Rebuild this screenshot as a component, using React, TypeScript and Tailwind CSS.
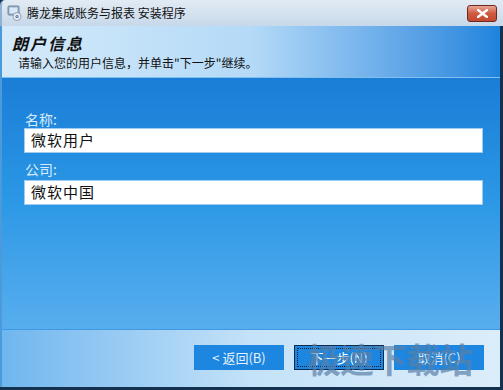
import React from 'react'

const cjk = { fontFamily: '"Noto Sans CJK SC", "Noto Sans", sans-serif' }

const InstallerIcon = () => (
  <svg width="16" height="16" viewBox="0 0 16 16">
    <rect x="1" y="1" width="11" height="9" rx="1" fill="#9bb3cc" stroke="#5c7591" strokeWidth="0.8" />
    <rect x="2.5" y="2.5" width="8" height="6" fill="#d8e8f6" />
    <circle cx="10" cy="11.5" r="4" fill="#e9eef3" stroke="#7f8fa0" strokeWidth="0.8" />
    <circle cx="10" cy="11.5" r="1.6" fill="#4a6ea0" />
    <circle cx="10" cy="11.5" r="0.6" fill="#ffffff" />
  </svg>
)

const WizardButton = ({ label, focused }: { label: string; focused?: boolean }) => (
  <button
    type="button"
    className={
      focused
        ? 'w-[90px] h-[25px] bg-[#1d86e0] text-white text-[13px] border border-[#0d2c4e] p-[2px] flex items-stretch'
        : 'w-[90px] h-[25px] bg-[#1d86e0] text-[#e6f2fc] text-[13px] flex items-center justify-center'
    }
    style={cjk}
  >
    {focused ? (
      <span className="flex-1 flex items-center justify-center border border-dotted border-[#0b1c30] leading-none">
        {label}
      </span>
    ) : (
      <span className="leading-none">{label}</span>
    )}
  </button>
)

export default function App() {
  return (
    <div className="w-[503px] h-[390px] flex flex-col bg-[#14314f] overflow-hidden" style={cjk}>
      {/* title bar */}
      <div className="h-[26px] flex items-center pl-[5px] pr-[6px] bg-gradient-to-b from-[#e2ebf4] to-[#c7d8ea] border-l-2 border-[#8fb2d2] rounded-tl-[5px]">
        <InstallerIcon />
        <span className="ml-[4px] text-[12px] text-[#111] leading-none">腾龙集成账务与报表 安装程序</span>
        <div className="ml-auto w-[30px] h-[17px] mt-[1px] rounded-[3px] border border-[#6f2a20] bg-gradient-to-b from-[#e8a494] via-[#cf5a41] to-[#c14a30] flex items-center justify-center">
          <svg width="11" height="9" viewBox="0 0 11 9">
            <path d="M1 1 L10 8 M10 1 L1 8" stroke="#ffffff" strokeWidth="2.4" strokeLinecap="square" />
          </svg>
        </div>
      </div>

      <div className="flex-1 flex flex-col border-l-2 border-[#4b9ad9] mr-[3px] mb-[3px]">
        {/* header */}
        <div className="h-[52px] flex flex-col justify-center pl-[10px] bg-gradient-to-r from-[#d4eafa] via-[#b4daf7] to-[#1b84dc] border-b border-[#7fc0f0]">
          <div className="text-[16px] font-bold italic text-[#111] leading-none tracking-[2px]">朗户信息</div>
          <div className="mt-[6px] pl-[6px] text-[12px] text-[#111] leading-none">请输入您的用户信息，并单击"下一步"继续。</div>
        </div>

        {/* content */}
        <div className="h-[251px] flex flex-col pl-[22px] pr-[17px] pt-[26px] bg-gradient-to-b from-[#1a7dd6] via-[#2c98e6] to-[#57aeee]">
          <div className="text-[14px] text-[#d6ecfc] leading-none h-[24px] flex items-end pb-[2px] pl-[1px]">名称:</div>
          <div className="h-[25px] bg-white border border-[#9fcdf1] flex items-center pl-[6px] text-[15px] text-[#111] tracking-[1px]">微软用户</div>
          <div className="text-[14px] text-[#d6ecfc] leading-none h-[27px] flex items-end pb-[4px] pl-[1px]">公司:</div>
          <div className="h-[25px] bg-white border border-[#9fcdf1] flex items-center pl-[6px] text-[15px] text-[#111] tracking-[1px]">微软中国</div>
        </div>

        {/* footer */}
        <div className="flex-1 relative flex items-center justify-end gap-[10px] pr-[16px] pb-[2px] bg-gradient-to-r from-[#6fb6ee] via-[#c4e2f8] to-[#dcedfa] border-t border-[#3f99e2]">
          <WizardButton label="< 返回(B)" />
          <WizardButton label="下一步(N)" focused />
          <WizardButton label="取消(C)" />
          <div className="absolute right-[28px] top-[12px] text-[34px] font-bold leading-none text-[#5a7fa6]/70 tracking-[-1px] pointer-events-none">
            极速下载站
          </div>
        </div>
      </div>
    </div>
  )
}
